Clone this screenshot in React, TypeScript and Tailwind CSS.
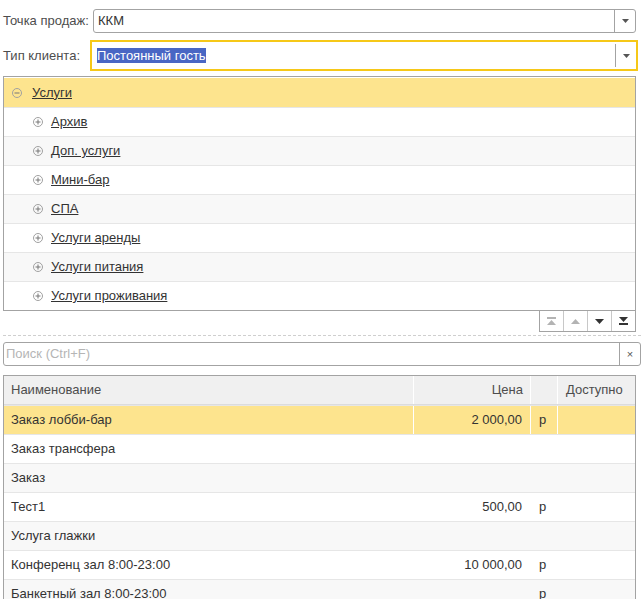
import React from 'react';

const treeItems = [
  'Архив',
  'Доп. услуги',
  'Мини-бар',
  'СПА',
  'Услуги аренды',
  'Услуги питания',
  'Услуги проживания',
];

const rows: { name: string; price?: string; cur?: string }[] = [
  { name: 'Заказ лобби-бар', price: '2 000,00', cur: 'р' },
  { name: 'Заказ трансфера' },
  { name: 'Заказ' },
  { name: 'Тест1', price: '500,00', cur: 'р' },
  { name: 'Услуга глажки' },
  { name: 'Конференц зал 8:00-23:00', price: '10 000,00', cur: 'р' },
  { name: 'Банкетный зал 8:00-23:00', cur: 'р' },
];

const DropArrow = () => (
  <svg width="7" height="4" viewBox="0 0 7 4">
    <path d="M0 0H7L3.5 4Z" fill="#555" />
  </svg>
);

const GroupIcon: React.FC<{ open?: boolean }> = ({ open }) => (
  <svg width="10" height="10" viewBox="0 0 10 10" className="shrink-0">
    <circle cx="5" cy="5" r="4.5" fill="none" stroke="#a0a0a0" strokeWidth="1" />
    <path d="M2.5 5H7.5" stroke="#777" strokeWidth="1" />
    {!open && <path d="M5 2.5V7.5" stroke="#777" strokeWidth="1" />}
  </svg>
);

const App: React.FC = () => {
  return (
    <div
      className="w-[644px] h-[599px] overflow-hidden bg-white text-[13px] text-[#333]"
      style={{ fontFamily: '"Liberation Sans", Arial, sans-serif' }}
    >
      {/* Point of sale */}
      <div className="flex items-center h-[24px] mt-[9px] pl-[3px]">
        <span className="w-[90px] text-[#4d4d4d]">Точка продаж:</span>
        <div className="flex items-center h-[24px] w-[543px] border border-[#a3a3a3] rounded-[3px]">
          <span className="flex-1 pl-[4px]">ККМ</span>
          <div className="w-[21px] h-full border-l border-[#a3a3a3] flex items-center justify-center">
            <DropArrow />
          </div>
        </div>
      </div>

      {/* Client type */}
      <div className="flex items-center h-[31px] mt-[7px] pl-[3px]">
        <span className="w-[87px] text-[#4d4d4d]">Тип клиента:</span>
        <div className="flex items-center h-[31px] w-[548px] border-2 border-[#f6c818]">
          <span className="flex-1 pl-[5px]">
            <span className="bg-[#4966c4] text-white">Постоянный гость</span>
          </span>
          <div className="w-[21px] h-[23px] border-l border-[#a3a3a3] flex items-center justify-center">
            <DropArrow />
          </div>
        </div>
      </div>

      {/* Tree */}
      <div className="mt-[5px] mx-[3px] w-[633px] border border-[#a3a3a3] pt-[1px]">
        <div className="flex items-center gap-[10px] h-[29px] bg-[#fde48e] pl-[8px]">
          <GroupIcon open />
          <span className="underline">Услуги</span>
        </div>
        {treeItems.map((t, i) => (
          <div
            key={t}
            className={`flex items-center gap-[8px] h-[29px] pl-[29px] border-t border-[#e6e6e6] ${
              i % 2 === 1 ? 'bg-[#f8f8f8]' : 'bg-white'
            }`}
          >
            <GroupIcon />
            <span className="underline">{t}</span>
          </div>
        ))}
      </div>

      {/* Tree scroll buttons */}
      <div className="flex justify-end pr-[8px]">
        <div className="flex h-[21px] border border-t-0 border-[#a3a3a3]">
          <div className="w-[24px] flex flex-col items-center justify-center gap-[1px] border-r border-[#c8c8c8]">
            <div className="w-[9px] h-[2px] bg-[#b3b3b3]" />
            <svg width="9" height="5" viewBox="0 0 9 5"><path d="M0 5H9L4.5 0Z" fill="#b3b3b3" /></svg>
          </div>
          <div className="w-[24px] flex items-center justify-center border-r border-[#c8c8c8]">
            <svg width="9" height="5" viewBox="0 0 9 5"><path d="M0 5H9L4.5 0Z" fill="#b3b3b3" /></svg>
          </div>
          <div className="w-[24px] flex items-center justify-center border-r border-[#c8c8c8]">
            <svg width="9" height="5" viewBox="0 0 9 5"><path d="M0 0H9L4.5 5Z" fill="#333" /></svg>
          </div>
          <div className="w-[23px] flex flex-col items-center justify-center gap-[1px]">
            <svg width="9" height="5" viewBox="0 0 9 5"><path d="M0 0H9L4.5 5Z" fill="#333" /></svg>
            <div className="w-[9px] h-[2px] bg-[#333]" />
          </div>
        </div>
      </div>

      {/* Separator */}
      <div className="mx-[3px] mt-[3px] border-t border-dashed border-[#cfcfcf]" />

      {/* Search */}
      <div className="mx-[3px] mt-[6px] flex items-center h-[24px] border border-[#a3a3a3] rounded-[3px]">
        <span className="flex-1 pl-[2px] text-[#b5b5b5]">Поиск (Ctrl+F)</span>
        <div className="w-[21px] h-full border-l border-[#a3a3a3] flex items-center justify-center text-[11px] text-[#555]">
          ×
        </div>
      </div>

      {/* Table */}
      <div className="mx-[3px] mt-[9px] w-[633px] border border-[#a3a3a3]">
        <div className="flex h-[29px] bg-[#f0f0f0] text-[#4d4d4d] border-b border-[#dcdcdc]">
          <div className="w-[410px] pl-[7px] flex items-center border-r border-white">Наименование</div>
          <div className="w-[117px] pr-[7px] flex items-center justify-end border-r border-white">Цена</div>
          <div className="w-[27px] border-r border-white" />
          <div className="flex-1 flex items-center pl-[8px]">Доступно</div>
        </div>
        {rows.map((r, i) => {
          const bg = i === 0 ? 'bg-[#fde48e]' : i % 2 === 0 ? 'bg-[#f8f8f8]' : 'bg-white';
          const sep = i === 0 ? 'border-white' : 'border-transparent';
          return (
            <div key={r.name} className={`flex h-[29px] border-t border-[#e6e6e6] ${bg}`}>
              <div className={`w-[410px] pl-[7px] flex items-center border-r ${sep}`}>{r.name}</div>
              <div className={`w-[117px] pr-[8px] flex items-center justify-end border-r ${sep}`}>
                {r.price ?? ''}
              </div>
              <div className={`w-[27px] pl-[8px] flex items-center border-r ${sep}`}>{r.cur ?? ''}</div>
              <div className="flex-1" />
            </div>
          );
        })}
      </div>
    </div>
  );
};

export default App;
